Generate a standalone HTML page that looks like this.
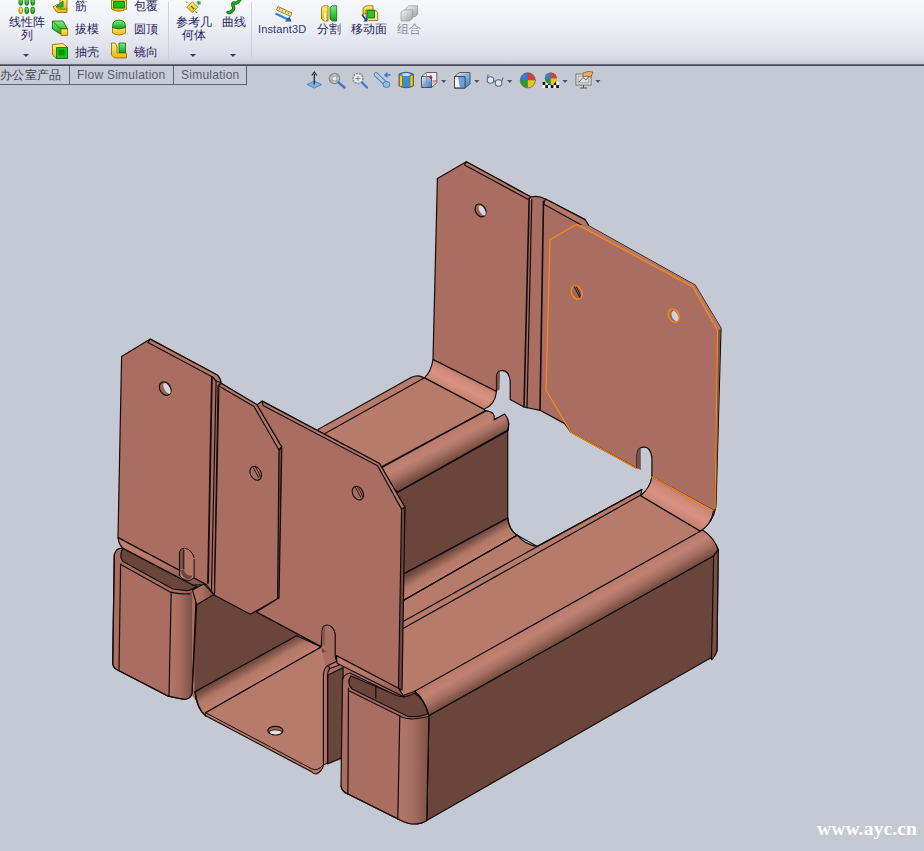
<!DOCTYPE html>
<html><head><meta charset="utf-8">
<style>
html,body{margin:0;padding:0;}
body{width:924px;height:851px;overflow:hidden;position:relative;background:#c5c9d3;font-family:"Liberation Sans",sans-serif;}
#tb{position:absolute;left:0;top:0;width:924px;height:64px;background:linear-gradient(#f6f8fc 0px,#f0f2f7 20px,#e5e7f0 40px,#d8dae5 58px,#c6c8d4 64px);}
#tbline{position:absolute;left:0;top:64px;width:924px;height:2px;background:linear-gradient(#6a6c7e 0px,#6a6c7e 1px,#484a5c 1px,#484a5c 2px);}
.t{position:absolute;font-size:12px;color:#24245a;white-space:nowrap;line-height:12px;}
.sep{position:absolute;top:2px;width:1px;height:58px;background:#cfd2da;}
.tab{position:absolute;top:66px;height:18px;border:1px solid #5d6170;border-top:none;background:#c8ccd7;font-size:12px;color:#5a5a72;line-height:18px;letter-spacing:0.25px;box-sizing:content-box;}
.arr{position:absolute;width:0;height:0;border-left:3px solid transparent;border-right:3px solid transparent;border-top:3px solid #3c3c5c;}
#wm{position:absolute;left:817px;top:818px;font-family:"Liberation Serif",serif;font-weight:bold;font-size:19.5px;line-height:22px;color:#fff;letter-spacing:0.15px;}
svg{position:absolute;left:0;top:0;}
</style></head><body>
<div id="tb"></div>
<div id="tbline"></div>
<div class="sep" style="left:168px"></div>
<div class="sep" style="left:251px"></div>

<div class="t" style="left:9px;top:16px">线性阵</div>
<div class="t" style="left:21px;top:29px">列</div>
<div class="arr" style="left:23px;top:54px"></div>
<div class="t" style="left:75px;top:0px">筋</div>
<div class="t" style="left:75px;top:23px">拔模</div>
<div class="t" style="left:75px;top:46px">抽壳</div>
<div class="t" style="left:134px;top:0px">包覆</div>
<div class="t" style="left:134px;top:23px">圆顶</div>
<div class="t" style="left:134px;top:46px">镜向</div>
<div class="t" style="left:176px;top:16px">参考几</div>
<div class="t" style="left:182px;top:29px">何体</div>
<div class="arr" style="left:190px;top:54px"></div>
<div class="t" style="left:222px;top:16px">曲线</div>
<div class="arr" style="left:230px;top:54px"></div>
<div class="t" style="left:258px;top:23px;font-size:11px;letter-spacing:0.15px;color:#34347a">Instant3D</div>
<div class="t" style="left:317px;top:23px">分割</div>
<div class="t" style="left:351px;top:23px">移动面</div>
<div class="t" style="left:397px;top:23px;color:#8a8a9a">组合</div>

<div class="tab" style="left:-1px;width:69px;color:#3c3c4c">办公室产品</div>
<div class="tab" style="left:69px;width:103px;padding-left:0"><span style="position:absolute;left:7px">Flow Simulation</span></div>
<div class="tab" style="left:173px;width:72px"><span style="position:absolute;left:7px">Simulation</span></div>

<svg id="icons" width="924" height="100" viewBox="0 0 924 100" style="position:absolute;left:0;top:0">
<defs>
<linearGradient id="iy" x1="0" y1="0" x2="0" y2="1"><stop offset="0" stop-color="#fff27a"/><stop offset="1" stop-color="#e8b800"/></linearGradient>
<linearGradient id="ig" x1="0" y1="0" x2="0" y2="1"><stop offset="0" stop-color="#7cf07c"/><stop offset="1" stop-color="#10a010"/></linearGradient>
<linearGradient id="ib" x1="0" y1="0" x2="1" y2="1"><stop offset="0" stop-color="#d8ecff"/><stop offset="1" stop-color="#3a78d0"/></linearGradient>
<linearGradient id="igr" x1="0" y1="0" x2="1" y2="1"><stop offset="0" stop-color="#f4f4f4"/><stop offset="1" stop-color="#a0a0a0"/></linearGradient>
</defs>
<!-- linear pattern capsules -->
<g stroke="#0b5a0b" stroke-width="0.8">
<rect x="19" y="-1" width="3.4" height="6.3" rx="1.7" fill="url(#ig)"/>
<rect x="25" y="-1" width="3.4" height="6.3" rx="1.7" fill="url(#ig)"/>
<rect x="31" y="-1" width="3.4" height="6.3" rx="1.7" fill="url(#ig)"/>
<rect x="19" y="7.3" width="3.4" height="6.3" rx="1.7" fill="url(#iy)" stroke="#9a7000"/>
<rect x="25" y="7.3" width="3.4" height="6.3" rx="1.7" fill="url(#ig)"/>
<rect x="31" y="7.3" width="3.4" height="6.3" rx="1.7" fill="url(#ig)"/>
</g>
<!-- rib -->
<g stroke="#8a6400" stroke-width="0.8" stroke-linejoin="round">
<path d="M53,7 L58,4 L58,9 L67,9 L67,12.5 L57,12.5 Z" fill="url(#iy)"/>
<path d="M60,-1 L67,-1 L67,9 L60,9 Z" fill="url(#iy)"/>
<path d="M56,7 L63,1 L63,7 Z" fill="#22c022" stroke="#0b6a0b"/>
</g>
<!-- draft -->
<g stroke-width="0.8" stroke-linejoin="round">
<path d="M52.5,21 L63,21 L67.5,29 L60,34 L52.5,29 Z" fill="url(#ig)" stroke="#0b6a0b"/>
<path d="M52.5,21 L60,28.5 L67.5,29" fill="none" stroke="#0b6a0b"/>
<rect x="61" y="29" width="6.5" height="6.5" fill="url(#iy)" stroke="#8a6400"/>
</g>
<!-- shell -->
<g stroke-width="0.8" stroke-linejoin="round">
<path d="M52.5,44.5 L63,43.5 L67.5,47.5 L67.5,58.5 L56.5,58.5 L52.5,55 Z" fill="url(#iy)" stroke="#8a6400"/>
<rect x="56.5" y="47.5" width="11" height="11" fill="#1cc01c" stroke="#0b6a0b"/>
<rect x="58.5" y="49.5" width="6" height="6" fill="#0a900a" stroke="none"/>
</g>
<!-- wrap -->
<g stroke-width="0.8">
<path d="M111.5,0 L111.5,9 Q119,13.5 126.5,9 L126.5,0 Z" fill="url(#iy)" stroke="#8a6400"/>
<rect x="113.5" y="1.5" width="11" height="6.5" fill="#1cc01c" stroke="#0b6a0b"/>
</g>
<!-- dome -->
<g stroke-width="0.8">
<path d="M112.5,27 L112.5,33 Q119,37 125.5,33 L125.5,27 Z" fill="url(#iy)" stroke="#8a6400"/>
<path d="M112.5,27.5 Q112,20 119,20 Q126,20 125.5,27.5 Q119,30.5 112.5,27.5 Z" fill="url(#ig)" stroke="#0b6a0b"/>
</g>
<!-- mirror -->
<g stroke-width="0.8" stroke-linejoin="round">
<path d="M111.5,43 L115,43 L117,46 L117,53 L126.5,53 L126.5,58 L114.5,58 L111.5,55 Z" fill="url(#iy)" stroke="#8a6400"/>
<rect x="119" y="43" width="6.5" height="9.5" fill="url(#ig)" stroke="#0b6a0b"/>
</g>
<!-- ref geometry -->
<g>
<path d="M186,1.5 L198.7,14.6" stroke="#1a8a1a" stroke-width="1" stroke-dasharray="2.5 2"/>
<path d="M192.4,1.8 L197.8,7.3 L192.4,12.8 L187,7.3 Z" fill="url(#iy)" stroke="#9a7000" stroke-width="0.8"/>
<path d="M191,6 L194,9" stroke="#1a8a1a" stroke-width="1.2"/>
<path d="M196.5,2.9 L201,2.9 M198.7,0.7 L198.7,5.1 M197,1.2 L200.4,4.6 M200.4,1.2 L197,4.6" stroke="#1a9a1a" stroke-width="0.9"/>
</g>
<!-- curve -->
<path d="M240.5,-1 Q237,4 235,3 Q232,2 233,6 Q235,9 232,11 Q230,13 228,12.5" fill="none" stroke="#0b6a0b" stroke-width="3.2" stroke-linecap="round"/>
<path d="M240.5,-1 Q237,4 235,3 Q232,2 233,6 Q235,9 232,11 Q230,13 228,12.5" fill="none" stroke="#20b020" stroke-width="1.6" stroke-linecap="round"/>
<!-- instant3d -->
<g>
<path d="M278,6.5 L292,13 L290.5,16.5 L276.5,10 Z" fill="#f4e27a" stroke="#6a5a20" stroke-width="0.7"/>
<path d="M280,8 L279.2,9.8 M283,9.5 L282.2,11.3 M286,11 L285.2,12.8 M289,12.5 L288.2,14.3" stroke="#6a5a20" stroke-width="0.6"/>
<path d="M275.5,13.5 L288,19.5" stroke="#2a8ae0" stroke-width="2.2"/>
<path d="M291.5,21.5 L285,21.5 L289.5,16.5 Z" fill="#1a5ab0"/>
</g>
<!-- split -->
<g stroke-width="0.8" stroke-linejoin="round">
<path d="M321.5,7.5 L324,5.8 L328,5.8 L328,21 L324,21 L321.5,19 Z" fill="url(#iy)" stroke="#8a6400"/>
<path d="M324.5,13 L326,13 L326,21 L324.5,21 Z" fill="#fff" stroke="none"/>
<path d="M330,7.5 L332.5,5.8 L336.7,5.8 L336.7,21 L332.5,21 L330,19 Z" fill="url(#ig)" stroke="#0b6a0b"/>
</g>
<!-- move face -->
<g stroke-width="0.8" stroke-linejoin="round">
<path d="M363,8 L366,5.8 L373,5.8 L373,14 L363,14 Z" fill="url(#iy)" stroke="#8a6400"/>
<path d="M366,10 L375,10 L377.7,12.5 L377.7,20.5 L368.5,20.5 L366,18 Z" fill="#f8e88a" stroke="#8a6400"/>
<rect x="367" y="10.5" width="7.5" height="7.5" fill="#30c030" stroke="#0b6a0b"/>
<path d="M362,14.5 L365.5,19.5" stroke="#1a3aa0" stroke-width="1.6"/>
<path d="M363.5,21.5 L367.5,21.5 L367,17 Z" fill="#1a3aa0"/>
</g>
<!-- combine (gray) -->
<g stroke="#9a9a9a" stroke-width="0.7" stroke-linejoin="round">
<path d="M406,8 L409,5.8 L417.6,5.8 L417.6,14.5 L414.6,17 L406,17 Z" fill="url(#igr)"/>
<path d="M401,12 L404,9.8 L412.6,9.8 L412.6,18.5 L409.6,21 L401,21 Z" fill="url(#igr)"/>
</g>

<!-- view toolbar -->
<g>
<path d="M307,84.5 L314.3,81 L321.6,84.5 L314.3,88 Z" fill="#7ab4ea" stroke="#3a70b0" stroke-width="0.7"/>
<path d="M314.3,84.5 L314.3,74" stroke="#222" stroke-width="1.2"/>
<path d="M311.8,75.5 L314.3,72 L316.8,75.5" fill="none" stroke="#222" stroke-width="1.1"/>
</g>
<g>
<circle cx="334.5" cy="78.5" r="5" fill="#e8ecf0" stroke="#8a8a8a" stroke-width="1.6"/>
<rect x="332" y="76" width="5" height="5" fill="none" stroke="#707070" stroke-width="0.8"/>
<path d="M338.5,82.5 L344.5,87.5" stroke="#3a7ad0" stroke-width="2.4" stroke-linecap="round"/>
</g>
<g>
<circle cx="358" cy="78.5" r="5" fill="#e8ecf0" stroke="#8a8a8a" stroke-width="1.6" stroke-dasharray="2 1"/>
<path d="M358,76 L358,81 M355.5,78.5 L360.5,78.5" stroke="#707070" stroke-width="0.8"/>
<path d="M362,82.5 L367,87.5" stroke="#3a7ad0" stroke-width="2.4" stroke-linecap="round"/>
</g>
<g>
<path d="M376,74.5 L386,84" stroke="#5a7aa0" stroke-width="4.5" stroke-linecap="round"/>
<path d="M376,74.5 L386,84" stroke="#a8d0f0" stroke-width="2.8" stroke-linecap="round"/>
<ellipse cx="386.5" cy="84.5" rx="3.5" ry="3" fill="#8ac0ea" stroke="#3a6aa0" stroke-width="0.8"/>
<path d="M390.5,75 L385.5,75 M387.5,72.8 L385,75 L387.5,77.2" fill="none" stroke="#2a7ae0" stroke-width="1.4"/>
</g>
<g stroke-width="0.8">
<path d="M399,74 Q406,70.5 413.4,74 L413.4,86 Q406,89.5 399,86 Z" fill="#3a8ae0" stroke="#1a4a90"/>
<path d="M399.5,75 L402.5,76 L402.5,87 L399.5,86 Z" fill="#f0d020" stroke="#8a6a00"/>
<path d="M410,76 L413,75 L413,86 L410,87 Z" fill="#f0d020" stroke="#8a6a00"/>
<ellipse cx="406.2" cy="74.5" rx="4" ry="1.6" fill="#cfd8e8" stroke="none"/>
</g>
<g stroke-width="0.8" stroke-linejoin="round">
<path d="M421.5,76.5 L426.5,72.5 L436.8,72.5 L436.8,83 L431.5,87.5 L421.5,87.5 Z" fill="#f0f0f0" stroke="#444"/>
<rect x="421.5" y="76.5" width="10" height="11" fill="url(#ib)" stroke="#444"/>
<path d="M426.5,72.5 L426.5,83 L421.5,87.5 M426.5,83 L436.8,83" fill="none" stroke="#888"/>
<path d="M431,75 L431,79 M429.5,77.5 L431,79 L432.5,77.5 M436,81 L432.5,81" stroke="#e02020" stroke-width="1"/>
</g>
<g stroke-width="0.8" stroke-linejoin="round">
<path d="M454.5,76.5 L459.5,72.5 L470,72.5 L470,84 L465,88 L454.5,88 Z" fill="url(#ib)" stroke="#444"/>
<rect x="454.5" y="76.5" width="10.5" height="11.5" fill="#f4f4f4" stroke="#444"/>
<path d="M458,77 L465,77 L465,88 L460,88 Z" fill="#6aa0e0" stroke="none"/>
<rect x="454.5" y="76.5" width="10.5" height="11.5" fill="none" stroke="#444"/>
</g>
<g fill="#dfe8f4" stroke="#5a6a80" stroke-width="1.1">
<circle cx="490.5" cy="80" r="3.3"/>
<circle cx="498.5" cy="83" r="3.3"/>
<path d="M493.5,80.5 L495.5,82" fill="none"/>
<path d="M487.5,79 L488,74.5 M501.5,82 L503,77.5" fill="none"/>
</g>
<g>
<circle cx="527.8" cy="80.3" r="7.6" fill="#2a9a2a"/>
<path d="M527.8,80.3 L527.8,72.7 A7.6,7.6 0 0 0 520.2,80.3 Z" fill="#3a7ad8"/>
<path d="M527.8,80.3 L527.8,72.7 A7.6,7.6 0 0 1 535.4,80.3 Z" fill="#e03a3a"/>
<path d="M527.8,80.3 L535.4,80.3 A7.6,7.6 0 0 1 527.8,87.9 Z" fill="#f0c020"/>
<circle cx="527.8" cy="80.3" r="7.6" fill="none" stroke="#606060" stroke-width="0.6"/>
</g>
<g>
<rect x="542.6" y="82" width="16.4" height="6" fill="#fff"/>
<path d="M542.6,82 h2.7v3h-2.7z M548,82 h2.7v3h-2.7z M553.5,82 h2.7v3h-2.7z M545.3,85 h2.7v3h-2.7z M550.7,85 h2.7v3h-2.7z M556.2,85 h2.7v3h-2.7z" fill="#111"/>
<circle cx="550.8" cy="78.5" r="6" fill="#2a9a2a"/>
<path d="M550.8,78.5 L550.8,72.5 A6,6 0 0 0 544.8,78.5 Z" fill="#3a7ad8"/>
<path d="M550.8,78.5 L550.8,72.5 A6,6 0 0 1 556.8,78.5 Z" fill="#e03a3a"/>
<path d="M550.8,78.5 L556.8,78.5 A6,6 0 0 1 550.8,84.5 Z" fill="#f0c020"/>
</g>
<g stroke-width="0.8">
<rect x="576" y="74" width="15" height="11" fill="#f4f4f4" stroke="#555"/>
<rect x="578" y="76" width="11" height="7" fill="#d8dde4" stroke="#888"/>
<path d="M579,82 L583,77.5 L586,80 L591,74" fill="none" stroke="#7a6a5a" stroke-width="1"/>
<path d="M583,73 Q588,70.5 593,72 L591,77 Q587,75 583,77 Z" fill="#e8b070" stroke="#8a5a20"/>
<path d="M580,88 L587,88 M583.5,85 L583.5,88" stroke="#555" stroke-width="1"/>
</g>
<g fill="#4c4c6c">
<path d="M441.2,80 L446.2,80 L443.7,83 Z"/>
<path d="M474.3,80 L479.3,80 L476.8,83 Z"/>
<path d="M507.2,80 L512.2,80 L509.7,83 Z"/>
<path d="M562.5,80 L567.5,80 L565,83 Z"/>
<path d="M595.5,80 L600.5,80 L598,83 Z"/>
</g>
</svg>


<svg id="model" width="924" height="851" viewBox="0 0 924 851">
<defs>
<linearGradient id="gBend1" gradientUnits="userSpaceOnUse" x1="455" y1="394" x2="464" y2="375.5">
<stop offset="0" stop-color="#c28272"/><stop offset="0.45" stop-color="#d99182"/><stop offset="0.75" stop-color="#d38b7b"/><stop offset="1" stop-color="#bf7f70"/>
</linearGradient>
<linearGradient id="gBend2" gradientUnits="userSpaceOnUse" x1="670.6" y1="514.4" x2="682" y2="493.3">
<stop offset="0" stop-color="#c28272"/><stop offset="0.45" stop-color="#d99182"/><stop offset="0.75" stop-color="#d38b7b"/><stop offset="1" stop-color="#bf7f70"/>
</linearGradient>
<linearGradient id="gFront" gradientUnits="userSpaceOnUse" x1="440" y1="435.9" x2="453" y2="461">
<stop offset="0" stop-color="#b87b6b"/><stop offset="0.35" stop-color="#bf8273"/><stop offset="0.6" stop-color="#a87062"/><stop offset="0.85" stop-color="#84574b"/><stop offset="1" stop-color="#6e493f"/>
</linearGradient>
<linearGradient id="gFloor" gradientUnits="userSpaceOnUse" x1="456" y1="546" x2="467" y2="565">
<stop offset="0" stop-color="#6a463c"/><stop offset="0.15" stop-color="#7e5247"/><stop offset="0.5" stop-color="#b27868"/><stop offset="1" stop-color="#c08171"/>
</linearGradient>
<linearGradient id="gFloor2" gradientUnits="userSpaceOnUse" x1="246" y1="663.6" x2="257" y2="683">
<stop offset="0" stop-color="#6a463c"/><stop offset="0.15" stop-color="#7e5247"/><stop offset="0.5" stop-color="#b27868"/><stop offset="1" stop-color="#c08171"/>
</linearGradient>
<linearGradient id="gBandR" x1="0" y1="0" x2="1" y2="0">
<stop offset="0" stop-color="#b47767"/><stop offset="0.45" stop-color="#a86f61"/><stop offset="1" stop-color="#7d5247"/>
</linearGradient>
<linearGradient id="gBoxFront" gradientUnits="userSpaceOnUse" x1="560" y1="609.3" x2="574.1" y2="634.3">
<stop offset="0" stop-color="#b87b6b"/><stop offset="0.35" stop-color="#bf8273"/><stop offset="0.62" stop-color="#a87062"/><stop offset="0.87" stop-color="#84574b"/><stop offset="1" stop-color="#6e493f"/>
</linearGradient>
<linearGradient id="gPanelBend" x1="0.4" y1="0" x2="0.5" y2="1">
<stop offset="0" stop-color="#c28373"/><stop offset="0.6" stop-color="#b07466"/><stop offset="1" stop-color="#845649"/>
</linearGradient>
</defs>
<g stroke="#140c0c" stroke-width="1.2" stroke-linejoin="round" stroke-linecap="round">
<!-- back assembly -->
<path fill="#a96e61" d="M437.4,178.5 L466.3,161.7 L531,197 Q538,195 545.5,199 L585,219.6 L589,226 L695.2,285.3 L721,328.2 L716,505 Q714,522 701.6,529.4 L640.6,495.8 Q651,488 651.9,477 L651.9,457.2 Q650,447 644.4,447.2 Q637,447 637,455 L637,468.4 L571,432.3 L564.7,423.6 L540,410.3 L524,407 L510.2,399.5 L510.2,381 Q509,370.5 502,370.3 Q496.5,371 496.5,377 L496.5,391.5 L433,359.5 Z"/>
<!-- back panel top strip -->
<path fill="#b57868" d="M466.3,161.7 L531,197 L528.5,199.5 L464.5,165 Z"/>
<path fill="#b57868" d="M545.5,199 L585,219.6 L589,226 L584,226.5 L543.5,204 Z"/>
<path fill="#b57868" stroke="none" d="M589,226 L695.2,285.3 L721,328.2 L717.6,330.5 L692.9,287 L576.6,224.2 Z"/>
<path fill="#7d5247" stroke="none" d="M717.6,330.5 L720.5,328.8 L716,505 L714,508.5 Z"/>
<path fill="#7a5046" stroke="none" d="M637.4,468 L637.4,453 Q638,449 640.8,448 L640.8,470 Z"/>
<!-- back bend -->
<path fill="url(#gBend1)" d="M433,359.5 L496.5,391.5 Q495,405 483.9,409.3 L424.4,377.9 Q431,372 433,359.5 Z"/>
<path fill="#7a5046" stroke="none" d="M496.8,391 L496.8,376 Q497.5,372 500,371.5 L499.5,389.5 Z"/>
<!-- orange bend -->
<path fill="url(#gBend2)" d="M651.9,477 L713.7,510.5 Q711,525 700.3,531.3 L640.6,495.8 Q650,488 651.9,477 Z"/>

<!-- tunnel dark face -->
<path fill="#69453b" stroke="none" d="M370,505 L507.7,428 L507.7,519 L370,595 Z"/>
<!-- tunnel top face -->
<path fill="#b77b6b" d="M318.4,429.3 L411.5,377.3 Q418,374 424.4,377.9 L483.9,409.3 L486,411.4 L494.7,419 L504.5,414.7 L508.8,423.3 L507.7,430.9 L398,492 L360,480 L305,446 Z"/>
<line x1="325" y1="433.6" x2="424.5" y2="377.7"/>
<!-- tunnel front bend -->
<path fill="url(#gFront)" d="M370,473 L486,410.6 Q496,412 494,420 L504.6,414.1 Q510,420 508.1,430 L398.3,491.7 Q380,485 370,473 Z"/>
<path fill="none" d="M370,474 L486,410.6 M398.3,491.7 L508.1,430"/>
<line x1="507.7" y1="428" x2="507.7" y2="519"/>
<!-- tunnel floor bend -->
<path fill="url(#gFloor)" d="M395,578.5 L507.7,518 Q509,530 517.2,535.2 L395,605.2 Z"/>
<!-- floor strip + box top -->
<path fill="#b77b6b" d="M395,605.2 L517.2,535.2 Q525,545 537.4,546.4 L641.9,489.5 L640.6,495.8 L700.3,531.3 Q704,532 711.5,540 Q717,545 718.2,550 L713.7,555.9 L427.4,714.3 L395,700 Z"/>
<line x1="395" y1="626" x2="537.4" y2="546.4"/>
<line x1="395" y1="633" x2="639.4" y2="495.8"/>
<path fill="none" d="M395,578.5 L507.7,518 Q509,530 517.2,535.2 L537.4,546.4 L641.9,489.5"/>
<line x1="395" y1="605.2" x2="517.2" y2="535.2"/>
<!-- box front bend -->
<path fill="url(#gBoxFront)" d="M414.7,691.2 L702.5,530 Q714,537 718.2,550 L713.7,555.9 L428.9,715.8 Q425,700 414.7,691.2 Z"/>
<!-- box dark front -->
<path fill="#69453b" d="M428.9,715.8 L713.7,555.9 L718.2,550 L717,650.8 Q714,657 707,660 L426.7,820.5 Z"/>
<path fill="#7a4f45" d="M713.7,555.9 L718.2,550 L717,650.8 Q715,657 711.5,659.7 Z"/>

<!-- lower-left filler -->
<path fill="#a96e61" stroke="none" d="M190,585 L260,605 L345,650 L398,684 L400,714 L341,760 L324,764 L316.7,768.6 L206.2,712.8 L190,693 Z"/>

<!-- floor channel -->
<path fill="#69453b" stroke="none" d="M192,590 L214,590 L330,650 L195,700 Z"/>
<path fill="url(#gFloor2)" d="M195,691.6 L296.6,635.8 L321.2,646.9 L205.6,712.7 L205.6,715.8 Q197,709 195,691.6 Z"/>
<path fill="#b77b6b" stroke="none" d="M205.6,712.7 L321.2,646.9 L325.6,668 L323.8,764.2 Q322,772 316.2,774 Q313,774 311.7,771.8 L205.6,715.8 Z"/>
<path fill="none" d="M205.6,712.7 L321.2,646.9 M323.8,764.2 Q322,772 316.2,774 Q313,774 311.7,771.8 L205.6,715.8"/>
<path fill="none" stroke-width="1" d="M205.6,712.7 L311.7,768.8 Q318,772 323.8,764.2"/>
<path fill="none" d="M195,691.6 Q197,709 205.6,715.8"/>
<ellipse cx="275.4" cy="730.6" rx="7.5" ry="4.3" fill="#9a6456"/>
<ellipse cx="275.6" cy="732.2" rx="5.6" ry="2.3" fill="#dfe2e8" stroke="none"/>
<path fill="none" stroke-width="0.8" d="M268.5,731.5 Q275,728 282.3,731.5"/>
<!-- floor right wall -->
<path fill="#69453b" d="M327.6,675.3 L343.1,667.5 L343.1,757 L327.6,764 Z"/>
<path fill="url(#gBandR)" d="M323.4,765 L323.4,675.3 Q324,667 328.3,665.5 L330,668.5 Q327.6,671 327.6,675.3 L327.6,763 Z"/>
<path fill="#b87b6b" d="M328.3,665.5 L336.8,661.2 L339.5,665 L330,668.5 Z"/>

<!-- box end -->
<path fill="#a96e61" d="M341,786 Q342,792 348,794 L400,820 Q408,824 413,824 Q422,824 426.7,820.5 L428.9,715.8 Q425,700 414.7,691.2 L399.3,697 L350,673 Q343,674 342.5,681 Z"/>
<path fill="url(#gBandR)" stroke="none" d="M400.4,716 L428.9,715.8 L426.7,820.5 Q421,824 413,824 L404,822 L398.2,819.9 Z"/>
<path fill="#69453b" d="M351,676 L397,695.5 Q405,698.5 414.5,693 Q425,700 427.8,714 Q418,717.5 408,716.5 L352,689 Q346,682 351,676 Z"/>
<path fill="none" d="M349.5,691 L403,717.5 Q411,720.5 428,716.5"/>
<line x1="375.8" y1="685" x2="375.8" y2="698"/>
<line x1="348.5" y1="688" x2="347.9" y2="794.2"/>
<line x1="399.8" y1="716" x2="397.8" y2="819.5"/>
<path fill="none" d="M341,786 Q342,792 348,794 L400,820 Q408,824 413,824 Q422,824 426.7,820.5 L428.9,715.8"/>

<!-- left box -->
<path fill="#a96e61" d="M114.3,554.9 Q116,547 123.8,548.2 L201.6,582 L196.7,604.8 L192,693 Q191,699 184.1,699.4 L168.3,696.2 L119,670.8 Q112.7,668 112.7,662.9 Z"/>
<path fill="url(#gBandR)" stroke="none" d="M171.2,592.3 L192,592 L192,693 Q190,699 184,699 L169,696 Z"/>
<path fill="#69453b" d="M121.5,552 Q122,548.5 124.1,548.9 L193.3,585.2 Q197.5,586.5 196.6,586 Q192,590.8 185.8,590.6 L172.8,589 L123,561.4 Q119.5,557 121.5,552 Z"/>
<path fill="none" d="M120.8,564.6 L170.6,592.2 Q180,594.5 190,593.9"/>
<line x1="120.6" y1="563.8" x2="119" y2="670"/>
<line x1="171.2" y1="592.3" x2="169" y2="696"/>
<path fill="none" d="M196,600 L192,693 Q191,699 184.1,699.4 L168.3,696.2 L119,670.8 Q112.7,668 112.7,662.9 L114.3,554.9"/>
<path fill="url(#gBandR)" d="M192.5,589.9 L203.8,583.9 L214,594.6 L196.7,604.8 Z"/>

<!-- left panel + strip -->
<path fill="#a96e61" d="M121.6,356.4 L150.2,339.1 L216.8,374.8 Q220,377 221,382.6 L218,386 L214.5,595.2 L206.3,584.5 L118,537.8 Z"/>
<path fill="#b57868" d="M150.2,339.1 L216.8,374.8 Q220,377 221,382.6 L216,381 L212.6,377 L148,342.5 Z"/>
<path fill="url(#gPanelBend)" d="M118.1,537.6 L206,584.5 L193.3,585.2 L124.1,548.9 Q119,546 118.1,537.6 Z"/>
<line x1="211.9" y1="377" x2="208" y2="583" stroke-width="1.8"/>
<line x1="216.1" y1="380" x2="211.5" y2="590"/>
<ellipse cx="165.2" cy="388.6" rx="5.3" ry="7.2" fill="#9a6456" transform="rotate(-30 165.2 388.6)"/>
<ellipse cx="167" cy="388.4" rx="2.6" ry="6" fill="#d4d8e0" stroke="none" transform="rotate(-30 167 388.4)"/>
<!-- slot -->
<path fill="#b27767" stroke="none" d="M179.4,575.2 L179.4,551.7 Q181,548 184.5,548.2 Q192,549.5 194.1,557.6 L194.1,577.6 Q191,581 187.6,580.5 Q181,579 179.4,575.2 Z"/>
<path fill="#7a5046" stroke="none" d="M179.4,569 L179.4,551.7 Q180.5,548.5 183.8,548.5 L183.8,569 Z"/>
<path fill="#69453b" stroke="none" d="M180,569.5 Q182.5,578.5 188,579.2 Q191.8,578.5 192.3,575.5 Q186,576.5 183.8,570 Z"/>
<path fill="none" stroke-width="1" d="M179.4,575.2 L179.4,551.7 Q181,548 184.5,548.2 Q192,549.5 194.1,557.6 M194.1,559.5 L194.1,577.6 Q191,581 187.6,580.5 Q181,579 179.4,575.2 M183.8,550 L183.8,569"/>
<!-- middle panel -->
<path fill="#a96e61" d="M218.9,386 L221,383.3 L257,404.7 L281.8,446.9 L279,597.9 L277.6,598.8 L250.2,614.3 L214.5,595.2 Z"/>
<path fill="#b57868" d="M221,383.3 L257,404.7 L281.8,446.9 L279,450 L254,406.5 L218.9,386 Z"/>
<path fill="#6e493f" d="M279,450 L281.8,446.9 L279.6,597.5 L277.6,598.8 Z"/>
<ellipse cx="255.7" cy="473.3" rx="5.3" ry="7.3" fill="#a86e61" stroke-width="1.1" transform="rotate(-28 255.7 473.3)"/>
<path fill="none" stroke-width="0.9" d="M253.2,467.5 Q255.5,472 258.6,477.6 M255.8,467.4 Q258.5,471.5 260.3,476.6"/>

<!-- front panel -->
<path fill="#a96e61" stroke="none" d="M321,648 L321,626 L336,626 L336,658 Z"/>
<path fill="#a96e61" d="M262.2,401.1 L379.5,463.5 L404.9,507.2 L401.6,610 L400.2,689.9 L341.7,664 Q335.5,662 335.2,656.3 L335.2,633.6 Q333,625 326.6,625 Q322.3,626 322.3,630 L321.2,646.6 L256.2,611.9 L277.6,598.8 L279,597.9 L281.8,446.9 L257,404.7 Z"/>
<path fill="#b57868" d="M262.2,401.1 L379.5,463.5 L404.9,507.2 L401.6,509.1 L377.6,465.8 L263,405.5 Z"/>
<path fill="#6e493f" d="M401.6,509.1 L404.9,507.2 L402,690 L398.5,688.2 Z"/>
<path fill="url(#gPanelBend)" d="M336.4,655.6 L398.5,688.2 L404.5,697.3 L337,663.2 Z"/>
<ellipse cx="357.9" cy="493.1" rx="5.2" ry="7.2" fill="#a86e61" stroke-width="1.1" transform="rotate(-28 357.9 493.1)"/>
<path fill="none" stroke-width="0.9" d="M355.5,487.4 Q357.8,492 360.8,497.4 M358,487.2 Q360.8,491.3 362.5,496.3"/>
<path fill="#8a5a4e" stroke="none" d="M322.3,646 L322.3,630 Q323,627 325,627 L325,645 Z"/>

<!-- back panel lines & holes -->
<line x1="529.2" y1="198.2" x2="524" y2="407" stroke-width="1.6"/>
<line x1="531.8" y1="199.5" x2="527" y2="408"/>
<line x1="543.5" y1="201.4" x2="540" y2="410.3" stroke-width="1.6"/>
<ellipse cx="480.5" cy="210.4" rx="5" ry="6.8" fill="#9a6456" transform="rotate(-30 480.5 210.4)"/>
<ellipse cx="482.2" cy="210.5" rx="2.6" ry="5.6" fill="#d4d8e0" stroke="none" transform="rotate(-30 482.2 210.5)"/>
<path fill="none" stroke="#ff8c10" stroke-width="1.1" d="M637,468.4 L571,432.3 L546,390 L550,239.7 L576.6,224.2 L692.9,287 L717.6,330.5 L715,508.5"/>

<path fill="none" stroke="#ff8c10" stroke-width="1.3" d="M651.9,477 L713,510.5"/>
<ellipse cx="576.7" cy="292.4" rx="5.2" ry="7" fill="#a0685a" stroke="#ff8c10" stroke-width="1.3" transform="rotate(-25 576.7 292.4)"/>
<path fill="none" stroke="#140c0c" stroke-width="0.9" d="M574.3,286.8 Q577,292 579.8,297.5 M576.5,286.8 Q579,292 580.5,296"/>
<ellipse cx="673.8" cy="315.6" rx="5" ry="7" fill="#a0685a" stroke="#f88a10" stroke-width="1.4" transform="rotate(-25 673.8 315.6)"/>
<ellipse cx="675" cy="316" rx="3" ry="5.3" fill="#cfd2da" stroke="none" transform="rotate(-25 675 316)"/>
</g>
</svg>




















<div id="wm">www.ayc.cn</div>
</body></html>
